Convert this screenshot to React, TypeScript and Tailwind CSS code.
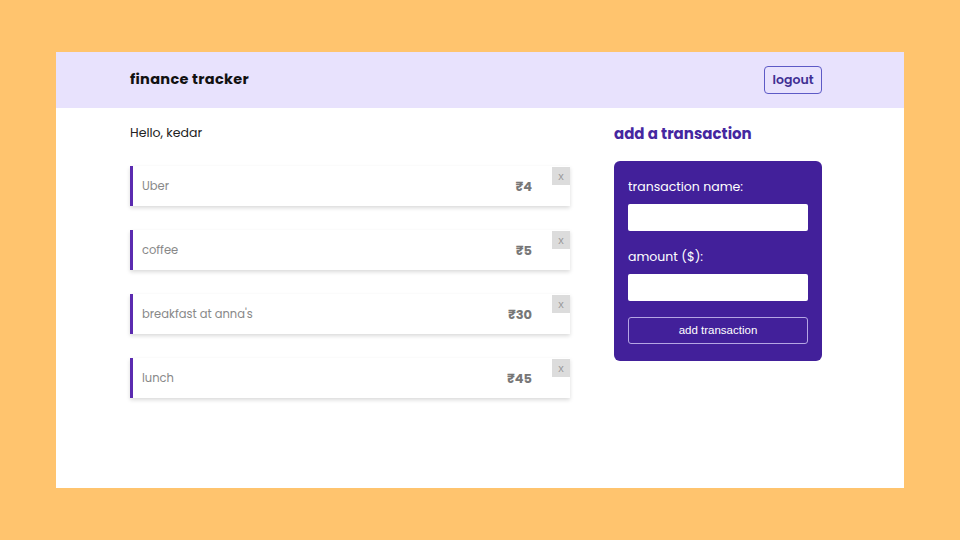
import React from "react";

const items = [
  { name: "Uber", amount: 4 },
  { name: "coffee", amount: 5 },
  { name: "breakfast at anna's", amount: 30 },
  { name: "lunch", amount: 45 },
];

const font = { fontFamily: "Poppins, 'Open Sans', 'Noto Sans', sans-serif" };

export default function App() {
  return (
    <div className="w-[960px] h-[540px] bg-[#ffc46e] pt-[52px] px-[56px]" style={font}>
      <div className="w-[848px] h-[436px] bg-white flex flex-col">
        <header className="h-[56px] bg-[#e8e2fd] flex items-center justify-between pl-[74px] pr-[82px]">
          <h1 className="text-[14.5px] font-bold text-[#111] tracking-[0.3px]">finance tracker</h1>
          <button className="h-[28px] w-[58px] border-[1.5px] border-[#5d5ac6] rounded-[4px] text-[#3f2e93] text-[12.5px] font-semibold">
            logout
          </button>
        </header>
        <div className="flex pl-[74px] pt-[14px] gap-[44px]">
          <div className="w-[440px]">
            <p className="text-[12.5px] text-[#222] h-[22px] leading-[22px]">Hello, kedar</p>
            <div className="flex flex-col gap-[24px] mt-[22px]">
              {items.map((it) => (
                <div
                  key={it.name}
                  className="relative h-[40px] flex items-center justify-between border-l-[3px] border-[#5b2bb0] bg-white shadow-[0_2px_4px_rgba(0,0,0,0.15)] pl-[9px] pr-[38px] pt-[2px]"
                >
                  <span className="text-[11.5px] text-[#888]">{it.name}</span>
                  <span className="text-[13px] font-bold text-[#777]">₹{it.amount}</span>
                  <span
                    className="absolute right-0 top-[1px] w-[18px] h-[18px] bg-[#dcdcdc] text-[#999] text-[11px] flex items-center justify-center"
                    style={{ fontFamily: "'Liberation Sans', Arial, sans-serif" }}
                  >
                    x
                  </span>
                </div>
              ))}
            </div>
          </div>
          <div className="w-[208px]">
            <h2 className="text-[15px] font-bold text-[#4527a0] h-[23px] leading-[24px]">add a transaction</h2>
            <form className="mt-[16px] bg-[#42209a] rounded-[6px] px-[14px] pt-[17px] pb-[17px] flex flex-col">
              <label className="block h-[18px] text-[12.5px] text-white leading-[18px]">transaction name:</label>
              <input className="block mt-[8px] h-[27px] bg-white rounded-[2px] outline-none" />
              <label className="block mt-[17px] h-[18px] text-[12.5px] text-white leading-[18px]">amount ($):</label>
              <input className="block mt-[8px] h-[27px] bg-white rounded-[2px] outline-none" />
              <button
                type="button"
                className="block mt-[16px] h-[27px] border-[1.5px] border-[#b5a6e4] rounded-[3px] text-white text-[11.5px]"
                style={{ fontFamily: "'Liberation Sans', Arial, sans-serif" }}
              >
                add transaction
              </button>
            </form>
          </div>
        </div>
      </div>
    </div>
  );
}
